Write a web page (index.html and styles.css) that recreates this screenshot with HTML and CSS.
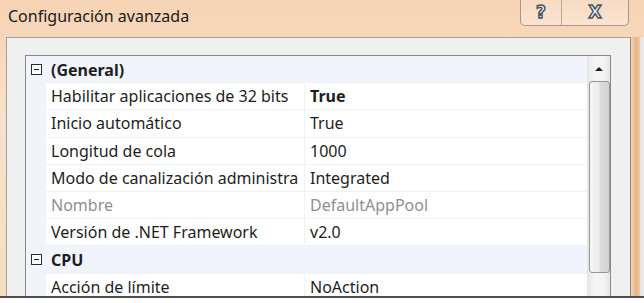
FILE: index.html
```html
<!DOCTYPE html>
<html lang="es">
<head>
  <meta charset="UTF-8">
  <title>Configuración avanzada</title>
  <link rel="stylesheet" href="styles.css">
</head>
<body>
  <div class="window">
    <div class="titlebar">
      <span class="title">Configuración avanzada</span>
      <div class="caption-buttons">
        <span class="cap-btn help">?</span>
        <span class="cap-btn close">X</span>
      </div>
    </div>

    <div class="frame">
      <div class="client">
        <div class="grid">
          <div class="rows">
            <div class="row category">
              <span class="gutter"><span class="toggle"></span></span>
              <span class="cat-name">(General)</span>
            </div>
            <div class="row">
              <span class="gutter"></span>
              <span class="name">Habilitar aplicaciones de 32 bits</span>
              <span class="value bold">True</span>
            </div>
            <div class="row">
              <span class="gutter"></span>
              <span class="name">Inicio automático</span>
              <span class="value">True</span>
            </div>
            <div class="row">
              <span class="gutter"></span>
              <span class="name">Longitud de cola</span>
              <span class="value">1000</span>
            </div>
            <div class="row">
              <span class="gutter"></span>
              <span class="name">Modo de canalización administra</span>
              <span class="value">Integrated</span>
            </div>
            <div class="row disabled">
              <span class="gutter"></span>
              <span class="name">Nombre</span>
              <span class="value">DefaultAppPool</span>
            </div>
            <div class="row">
              <span class="gutter"></span>
              <span class="name">Versión de .NET Framework</span>
              <span class="value">v2.0</span>
            </div>
            <div class="row category">
              <span class="gutter"><span class="toggle"></span></span>
              <span class="cat-name">CPU</span>
            </div>
            <div class="row">
              <span class="gutter"></span>
              <span class="name">Acción de límite</span>
              <span class="value">NoAction</span>
            </div>
          </div>
          <div class="scrollbar">
            <div class="sb-up"><span class="arrow"></span></div>
            <div class="sb-thumb"></div>
          </div>
        </div>
      </div>
      <div class="outer-edge"></div>
    </div>
  </div>
</body>
</html>
```

FILE: styles.css
```css
body {
  margin: 0;
  background: #ffffff;
  font-family: "Noto Sans", "Open Sans", sans-serif;
  color: #1e1e1e;
  overflow: hidden;
}
.window {
  height: 296px;
  overflow: hidden;
  border-bottom: 2px solid #4e4e4e;
  background: linear-gradient(180deg, #f6d3b4 0%, #f9e0ca 40%, #f7dcc4 100%);
}
.titlebar {
  height: 37px;
  display: flex;
  justify-content: space-between;
  align-items: flex-start;
}
.title {
  font-size: 16px;
  margin: 5px 0 0 8px;
  color: #1a1a1a;
}
.caption-buttons {
  display: flex;
  margin-right: 15px;
  margin-top: -4px;
  border: 1px solid #a99886;
  border-top: none;
  border-radius: 0 0 5px 5px;
  background: linear-gradient(180deg, rgba(255,255,255,0.15), rgba(255,255,255,0.35));
}
.cap-btn {
  height: 27px;
  display: flex;
  align-items: center;
  justify-content: center;
  padding-top: 2px;
  font-family: "DejaVu Sans", sans-serif;
  font-weight: bold;
  font-size: 17px;
  color: #ffffff;
  -webkit-text-stroke: 1.5px #4a5566;
}
.help {
  width: 40px;
  border-right: 1px solid #b9a794;
}
.close {
  width: 66px;
}
.frame {
  display: flex;
  padding-left: 6px;
}
.client {
  flex: 1;
  background: #f0f0f0;
  border-top: 1px solid #a5a09a;
  border-left: 1px solid #a5a09a;
  border-right: 1px solid #8c8a88;
  padding: 17px 19px 0 18px;
  height: 260px;
}
.outer-edge {
  width: 13px;
  background: linear-gradient(90deg, #f4d2b2 0%, #e9b486 40%, #f3cba8 70%, #e4e4e4 72%, #eeeeee 100%);
}
.grid {
  display: flex;
  border: 1px solid #828790;
  background: #ffffff;
  height: 260px;
}
.rows {
  flex: 1;
  display: flex;
  flex-direction: column;
}
.row {
  display: flex;
  height: 27.2px;
  flex-shrink: 0;
  font-size: 16px;
  line-height: 14px;
}
.gutter {
  width: 20px;
  background: #f1f5fb;
  display: flex;
  align-items: center;
  justify-content: center;
  flex-shrink: 0;
}
.name,
.value {
  display: flex;
  align-items: center;
  padding-left: 5px;
  border-bottom: 1px solid #eef2f9;
  white-space: nowrap;
  overflow: hidden;
}
.name {
  width: 253px;
  border-right: 1px solid #eef2f9;
  flex-shrink: 0;
}
.value {
  flex: 1;
}
.bold {
  font-weight: bold;
}
.disabled {
  color: #8f8f8f;
}
.category {
  background: #f1f5fb;
}
.cat-name {
  display: flex;
  align-items: center;
  padding-left: 5px;
  font-weight: bold;
}
.toggle {
  width: 9px;
  height: 9px;
  border: 1px solid #2a2a2a;
  background: #ffffff;
  position: relative;
}
.toggle::after {
  content: "";
  position: absolute;
  left: 2px;
  top: 4px;
  width: 5px;
  height: 1px;
  background: #1a1a1a;
}
.scrollbar {
  width: 22px;
  background: linear-gradient(90deg, #e8e8e8, #f4f4f4 30%, #f4f4f4 70%, #e6e6e6);
  border-left: 1px solid #e4e4e4;
  display: flex;
  flex-direction: column;
  align-items: center;
}
.sb-up {
  height: 25px;
  width: 100%;
  display: flex;
  align-items: center;
  justify-content: center;
}
.arrow {
  width: 0;
  height: 0;
  border-left: 4px solid transparent;
  border-right: 4px solid transparent;
  border-bottom: 4px solid #1f1f1f;
}
.sb-thumb {
  width: 19px;
  height: 190px;
  border: 1px solid #979797;
  border-radius: 3px;
  background: linear-gradient(90deg, #f6f6f6 0%, #ececec 45%, #dcdcdc 55%, #d2d2d2 100%);
}
```
